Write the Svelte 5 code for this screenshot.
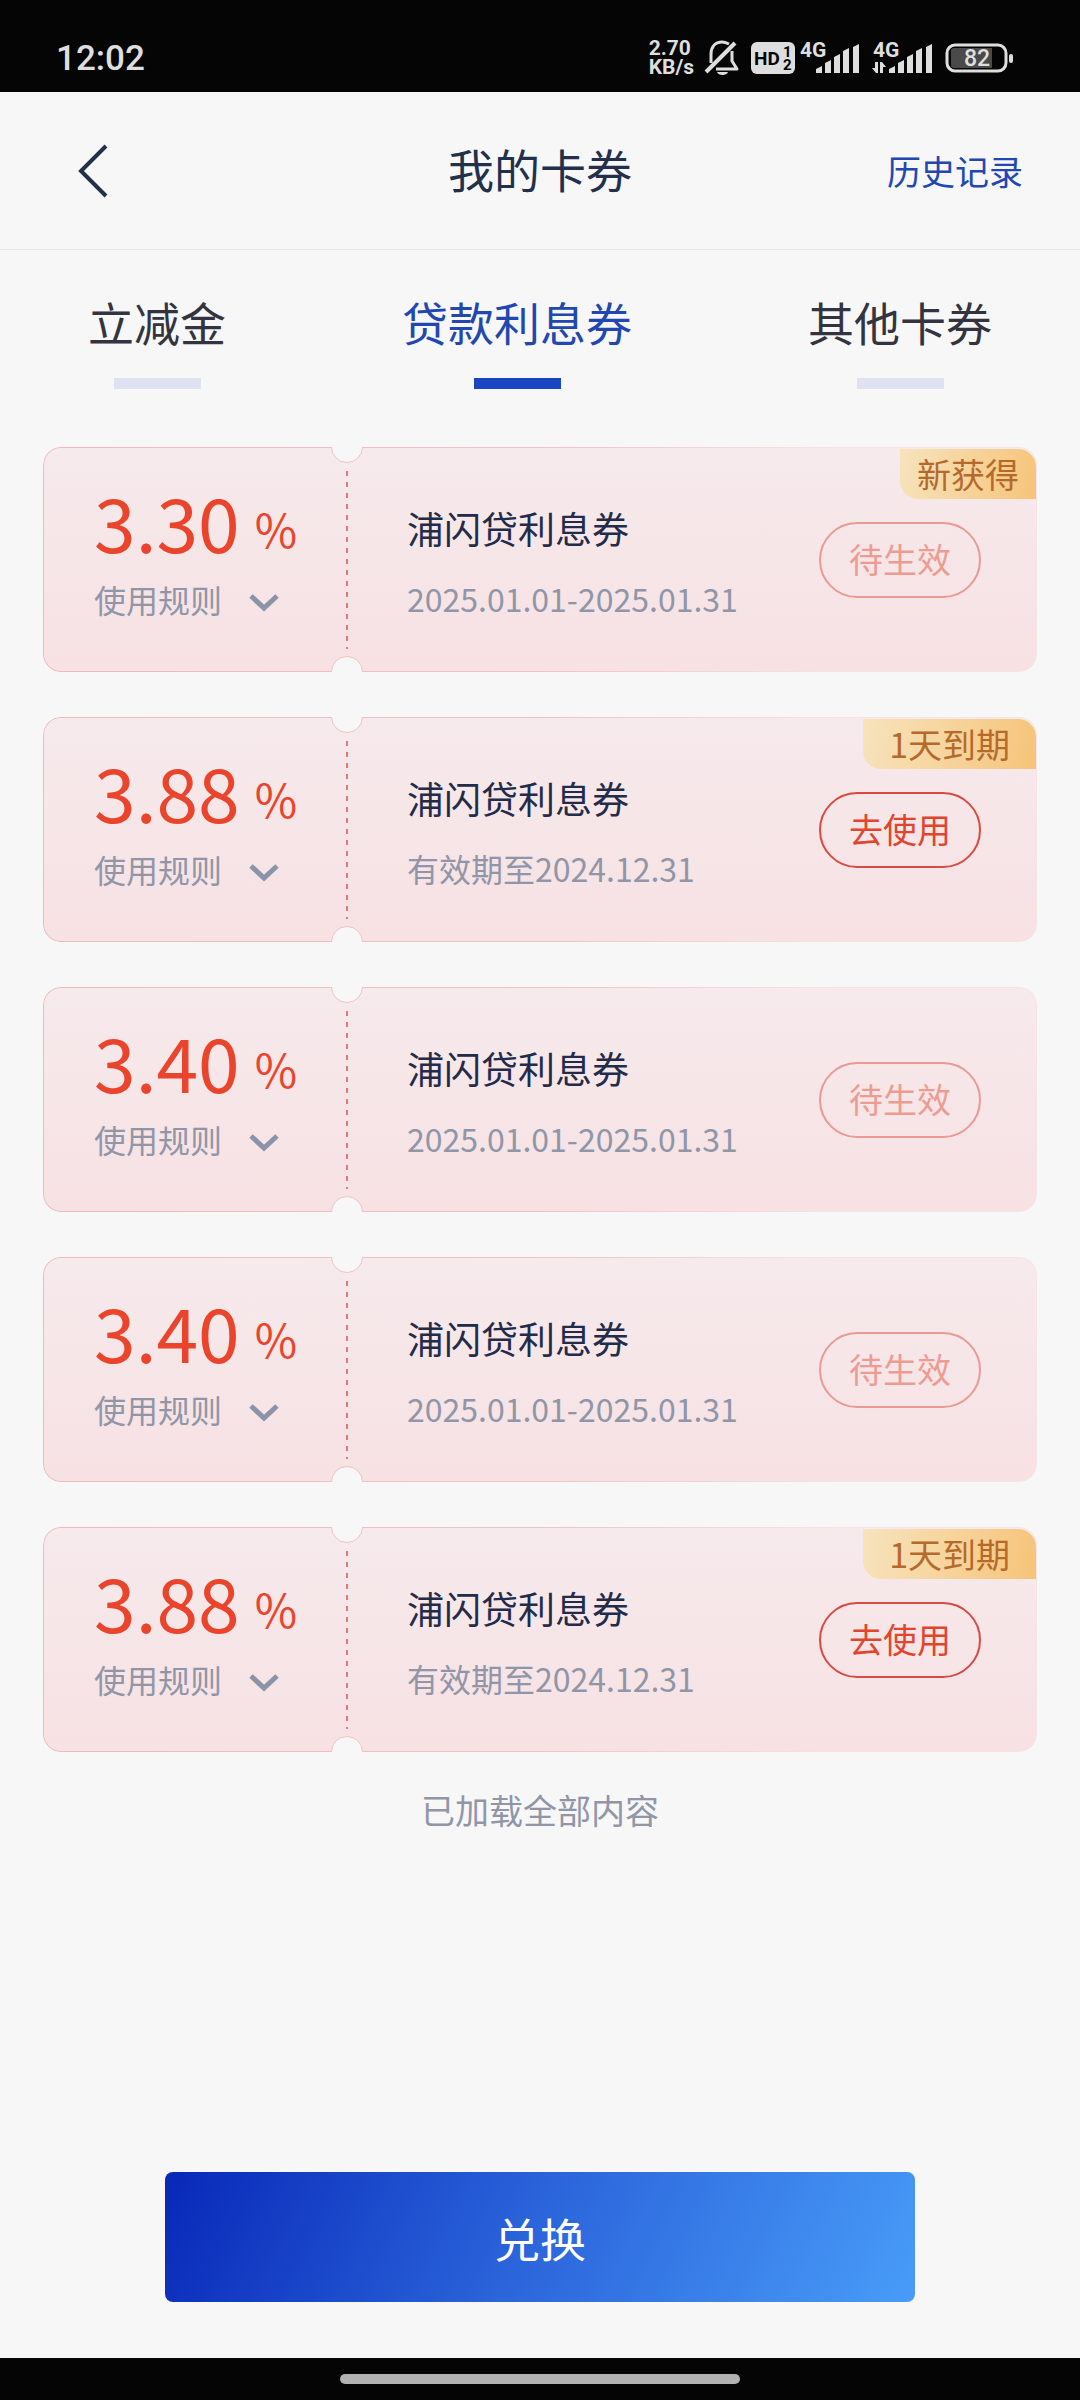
<script lang="ts">
  interface Coupon {
    rate: string;
    name: string;
    period: string;
    usable: boolean;
    badge?: string;
    badgeType?: 'new' | 'expiring';
  }

  const tabs = ['立减金', '贷款利息券', '其他卡券'];

  const coupons: Coupon[] = [
    { rate: '3.30', name: '浦闪贷利息券', period: '2025.01.01-2025.01.31', usable: false, badge: '新获得', badgeType: 'new' },
    { rate: '3.88', name: '浦闪贷利息券', period: '有效期至2024.12.31', usable: true, badge: '1天到期', badgeType: 'expiring' },
    { rate: '3.40', name: '浦闪贷利息券', period: '2025.01.01-2025.01.31', usable: false },
    { rate: '3.40', name: '浦闪贷利息券', period: '2025.01.01-2025.01.31', usable: false },
    { rate: '3.88', name: '浦闪贷利息券', period: '有效期至2024.12.31', usable: true, badge: '1天到期', badgeType: 'expiring' }
  ];

  let activeTab = $state(1);
</script>

{#snippet signal(data: boolean)}
  <svg class="signal" width="61" height="36" viewBox="0 0 61 36" fill="#dedede">
    <text x="0" y="17" font-size="21" font-weight="700">4G</text>
    {#if data}
      <path d="M5 22v11h-2l-4-5h3v-6zM7 33V22h2l4 5h-3v6z" />
    {/if}
    <path d="M16 29l6-3v7h-6zM16 30h6v3h-6zM25 23l6-3v13h-6zM34 17l6-3v19h-6zM43 11l6-3v25h-6zM53 7l6-3v29h-6z" />
  </svg>
{/snippet}

<div class="page">
  <div class="status-bar">
    <span class="time">12:02</span>
    <div class="status-icons">
      <div class="speed">
        <span>2.70</span>
        <span>KB/s</span>
      </div>
      <svg class="bell" width="34" height="36" viewBox="0 0 34 36" fill="none" stroke="#dedede" stroke-width="3">
        <path d="M6 23V14C6 7 10 2 17 2c3 0 5 1 7 2M27 11v10l5 8H11" stroke-linejoin="round" />
        <path d="M1 32L30 3" stroke-width="4" />
        <path d="M12 32h11c-1 4-10 4-11 0z" fill="#dedede" stroke="none" />
      </svg>
      <svg class="hd" width="44" height="36" viewBox="0 0 44 36">
        <rect x="0" y="2" width="44" height="32" rx="6" fill="#dedede" />
        <text x="3" y="25" font-size="19" font-weight="700" fill="#050505">HD</text>
        <text x="32" y="17" font-size="15" font-weight="700" fill="#050505">1</text>
        <text x="32" y="30" font-size="15" font-weight="700" fill="#050505">2</text>
      </svg>
      {@render signal(false)}
      {@render signal(true)}
      <svg class="battery" width="68" height="36" viewBox="0 0 68 36">
        <rect x="1" y="5" width="59" height="26" rx="8" fill="none" stroke="#dedede" stroke-width="3" />
        <path d="M8 8h38v20H8q-3 0-3-3V11q0-3 3-3z" fill="#4a4a4a" />
        <rect x="63" y="14" width="4" height="9" rx="2" fill="#dedede" />
        <text x="18" y="26" font-size="23" font-weight="500" fill="#dedede">82</text>
      </svg>
    </div>
  </div>

  <header class="nav-bar">
    <button class="back" aria-label="返回">
      <svg width="32" height="54" viewBox="0 0 32 54" fill="none" stroke="#22304c" stroke-width="4">
        <path d="M29 2L4 27l25 25" />
      </svg>
    </button>
    <h1>我的卡券</h1>
    <a class="history" href="#history">历史记录</a>
  </header>

  <nav class="tabs">
    {#each tabs as tab, i}
      <button class="tab" class:active={activeTab === i} onclick={() => (activeTab = i)}>{tab}</button>
    {/each}
  </nav>

  <main>
    <ul class="coupons">
      {#each coupons as coupon}
        <li class="coupon">
          <div class="stub">
            <div class="rate">
              <span class="rate-value">{coupon.rate}</span>
              <span class="rate-unit">%</span>
            </div>
            <button class="rules">
              使用规则
              <svg width="30" height="36" viewBox="0 0 30 36" fill="none" stroke="#8b93a8" stroke-width="5">
                <path d="M2 15l13 12 13-12" />
              </svg>
            </button>
          </div>
          <div class="tear"></div>
          <div class="info">
            <h2>{coupon.name}</h2>
            <p>{coupon.period}</p>
          </div>
          <button class="action" disabled={!coupon.usable}>{coupon.usable ? '去使用' : '待生效'}</button>
          {#if coupon.badge}
            <span class="badge {coupon.badgeType}">{coupon.badge}</span>
          {/if}
        </li>
      {/each}
    </ul>
    <p class="end">已加载全部内容</p>
  </main>

  <footer>
    <button class="redeem">兑换</button>
  </footer>

  <div class="gesture-bar"><span></span></div>
</div>

<style>
  :global(body) {
    background: #f7f7f7;
  }

  .page {
    min-height: 100vh;
    display: flex;
    flex-direction: column;
    background: #f7f7f7;
    color: #22304c;
    font-family: "Noto Sans CJK SC", sans-serif;
  }

  button {
    font: inherit;
    color: inherit;
    background: none;
    border: none;
    padding: 0;
    cursor: pointer;
  }

  h1,
  h2,
  p,
  ul {
    margin: 0;
    padding: 0;
    font-weight: 400;
    list-style: none;
  }

  svg {
    display: block;
    overflow: visible;
    flex: none;
  }

  /* Status bar */
  .status-bar {
    height: 92px;
    box-sizing: border-box;
    padding: 24px 66px 0 56px;
    display: flex;
    align-items: center;
    justify-content: space-between;
    background: #050505;
    color: #dedede;
    font-family: Roboto, sans-serif;
  }

  .time {
    font-size: 35px;
    font-weight: 500;
  }

  .status-icons {
    display: flex;
    align-items: center;
  }

  .speed {
    display: flex;
    flex-direction: column;
    margin-right: 11px;
    font-size: 21px;
    line-height: 19px;
    font-weight: 700;
  }

  .bell {
    margin-right: 12px;
  }

  .hd {
    margin-right: 5px;
  }

  .signal {
    margin-right: 12px;
  }

  /* Header */
  .nav-bar {
    height: 157px;
    padding: 0 57px;
    display: grid;
    grid-template-columns: 1fr auto 1fr;
    align-items: center;
    border-bottom: 1px solid #e4e6ea;
  }

  .back {
    justify-self: start;
    padding: 0 20px;
  }

  .nav-bar h1 {
    padding-bottom: 5px;
    font-size: 46px;
  }

  .history {
    justify-self: end;
    font-size: 34px;
    color: #2247b0;
    text-decoration: none;
  }

  /* Tabs */
  .tabs {
    display: flex;
    justify-content: space-around;
    padding: 44px 0 58px;
  }

  .tab {
    display: flex;
    flex-direction: column;
    align-items: center;
    gap: 30px;
    font-size: 46px;
    line-height: 54px;
    color: #33343f;
  }

  .tab::after {
    content: '';
    width: 87px;
    height: 11px;
    background: #dfe2f2;
  }

  .tab.active {
    color: #2247b0;
  }

  .tab.active::after {
    background: #1a46c4;
  }

  /* Coupons */
  main {
    flex: 1;
  }

  .coupons {
    display: flex;
    flex-direction: column;
    gap: 45px;
    padding: 0 43px;
  }

  .coupon {
    position: relative;
    display: flex;
    height: 223px;
    border: 1px solid transparent;
    border-radius: 18px;
    background:
      linear-gradient(180deg, #f6eaec, #f7e1e3) padding-box,
      linear-gradient(90deg, #efb9bd 0%, #f0c2c5 50%, #f6e3e5 80%) border-box;
    clip-path: inset(0 round 18px);
  }

  .stub {
    width: 287px;
    box-sizing: border-box;
    padding: 33px 0 0 50px;
  }

  .rate {
    display: flex;
    align-items: flex-end;
    gap: 15px;
    color: #ea452c;
  }

  .rate-value {
    font-size: 75px;
    line-height: 80px;
  }

  .rate-unit {
    font-size: 46px;
    line-height: 66px;
  }

  .rules {
    display: flex;
    align-items: center;
    gap: 27px;
    margin-top: 16px;
    font-size: 32px;
    line-height: 44px;
    color: #9096a8;
  }

  /* Perforation with a round notch at each end */
  .tear {
    position: relative;
    width: 32px;
    background: repeating-linear-gradient(180deg, #e0797e 0 5px, transparent 5px 11px) center / 2px 178px no-repeat;
  }

  .tear::before,
  .tear::after {
    content: '';
    position: absolute;
    left: 0;
    width: 30px;
    height: 30px;
    border: 1px solid #f0c2c5;
    border-radius: 50%;
    background: #f7f7f7;
  }

  .tear::before {
    top: -17px;
  }

  .tear::after {
    bottom: -17px;
  }

  .info {
    flex: 1;
    padding: 56px 0 0 44px;
  }

  .info h2 {
    font-size: 37px;
    line-height: 48px;
    color: #222b4a;
  }

  .info p {
    margin-top: 24px;
    font-size: 32px;
    line-height: 44px;
    color: #9096a8;
  }

  .action {
    align-self: center;
    width: 162px;
    height: 76px;
    padding-bottom: 2px;
    margin-right: 55px;
    border: 2px solid #d94a45;
    border-radius: 38px;
    font-size: 34px;
    line-height: 44px;
    color: #e0452f;
  }

  .action:disabled {
    border-color: #e99a94;
    color: #ec9c93;
    cursor: default;
  }

  .badge {
    position: absolute;
    top: 1px;
    right: 0;
    padding: 0 17px;
    border-radius: 0 18px 0 18px;
    background: linear-gradient(100deg, #f7e3bd, #f6c47a);
    font-size: 34px;
    line-height: 50px;
    color: #b56a2c;
  }

  .badge.expiring {
    padding: 0 26px;
  }

  .end {
    margin-top: 34px;
    text-align: center;
    font-size: 34px;
    line-height: 48px;
    color: #9096a8;
  }

  /* Bottom */
  footer {
    padding: 40px 0 56px;
    display: flex;
    justify-content: center;
  }

  .redeem {
    width: 750px;
    max-width: 90%;
    height: 130px;
    border-radius: 8px;
    background: linear-gradient(115deg, #0828b8, #2c66dc 50%, #489cf8);
    color: #fff;
    font-size: 46px;
  }

  .gesture-bar {
    height: 42px;
    display: flex;
    align-items: center;
    justify-content: center;
    background: #050505;
  }

  .gesture-bar span {
    width: 400px;
    height: 10px;
    border-radius: 5px;
    background: #b2b2b2;
  }
</style>
